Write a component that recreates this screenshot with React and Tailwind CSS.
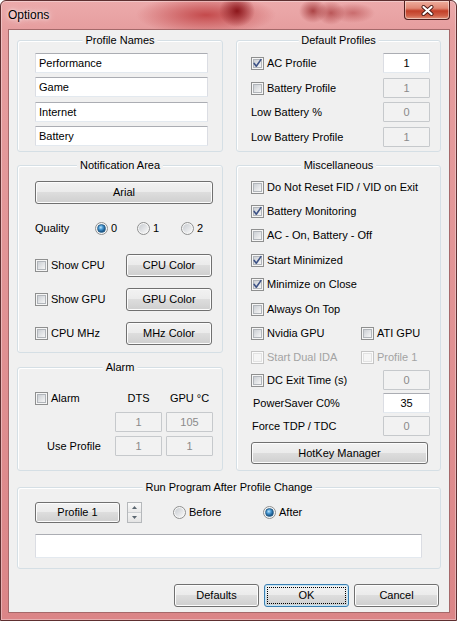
import React from "react";

const B = (...c) => c.filter(Boolean).join(" ");

function Group({ title, className, children }) {
  return (
    <div
      className={B(
        "relative shrink-0 rounded-[3px] border border-[#d5dfe5] shadow-[inset_1px_1px_0_#ffffff]",
        className
      )}
    >
      <span className="absolute left-1/2 top-[-1px] -translate-x-1/2 -translate-y-1/2 whitespace-nowrap bg-[#f0f0f0] px-[3px] leading-[13px]">
        {title}
      </span>
      {children}
    </div>
  );
}

function Check({ on, dis }) {
  return (
    <span
      className={B(
        "relative block h-[13px] w-[13px] shrink-0 border p-px",
        dis ? "border-[#c5c5c5] bg-[#fbfbfb]" : "border-[#8e8f8f] bg-[#f6f6f6]"
      )}
    >
      <span
        className={B(
          "block h-full w-full border",
          dis
            ? "border-[#e2e2e2] bg-[#f5f5f5]"
            : "border-[#b1b5ba] bg-[linear-gradient(135deg,#cbcfd4,#f6f6f6)]"
        )}
      />
      {on && (
        <svg className="absolute left-0 top-0" width="11" height="11" viewBox="0 0 11 11">
          <path
            d="M2.2 5.4 L4.3 8.2 L8.9 1.6"
            fill="none"
            stroke="#3d5286"
            strokeWidth="1.6"
            strokeLinecap="round"
            strokeLinejoin="round"
          />
        </svg>
      )}
    </span>
  );
}

function CL({ on, dis, children, className }) {
  return (
    <div className={B("flex items-center", className)}>
      <Check on={on} dis={dis} />
      <span className={B("ml-[3px] whitespace-nowrap leading-[13px]", dis && "text-[#a3a3a3]")}>
        {children}
      </span>
    </div>
  );
}

function Radio({ on }) {
  return (
    <span className="flex h-[13px] w-[13px] shrink-0 items-center justify-center rounded-full border border-[#8e8f8f] bg-[#f7f7f7]">
      {on ? (
        <span className="block h-[9px] w-[9px] rounded-full border border-[#2c628b] bg-[radial-gradient(circle_at_40%_35%,#bfe6fc_0%,#4596d1_35%,#1a5689_70%,#0e3f66_100%)]" />
      ) : (
        <span className="block h-[9px] w-[9px] rounded-full bg-[linear-gradient(135deg,#c8ccd1,#f8f8f8)]" />
      )}
    </span>
  );
}

function Btn({ className, children, def }) {
  return (
    <div
      className={B(
        "flex shrink-0 items-center justify-center rounded-[3px] border leading-[13px] bg-[linear-gradient(to_bottom,#f2f2f2_0%,#ebebeb_49%,#dddddd_50%,#cfcfcf_100%)]",
        def
          ? "border-[#3c7fb1] shadow-[inset_0_0_0_1px_#c4e5f6] outline-1 outline-dotted outline-[#000000] -outline-offset-4"
          : "border-[#707070] shadow-[inset_0_0_0_1px_#fcfcfc]",
        className
      )}
    >
      {children}
    </div>
  );
}

function Field({ className, v, dis, left }) {
  return (
    <div
      className={B(
        "flex shrink-0 items-center rounded-[1px] border leading-[13px]",
        left ? "pl-[3px]" : "justify-center",
        dis
          ? "border-[#c6c9cc] bg-[#f2f2f2] text-[#8a8a8a]"
          : "border-[#abadb3] border-x-[#dbdde3] border-b-[#e3e9ef] bg-white",
        className
      )}
    >
      {v}
    </div>
  );
}

function Spinner({ className }) {
  return (
    <div className={B("flex h-[21px] w-[15px] shrink-0 flex-col border border-[#b5b8bb] bg-[#f4f4f4]", className)}>
      <div className="flex flex-1 items-center justify-center border-b border-[#cdd0d3] bg-[linear-gradient(to_bottom,#fafafa,#e9e9e9)]">
        <svg width="5" height="3" viewBox="0 0 5 3">
          <path d="M2.5 0 L5 3 L0 3Z" fill="#5a6670" />
        </svg>
      </div>
      <div className="flex flex-1 items-center justify-center bg-[linear-gradient(to_bottom,#f4f4f4,#e4e4e4)]">
        <svg width="5" height="3" viewBox="0 0 5 3">
          <path d="M0 0 L5 0 L2.5 3Z" fill="#5a6670" />
        </svg>
      </div>
    </div>
  );
}

export default function App() {
  return (
    <div className="h-[621px] w-[457px] font-['Liberation_Sans',Arial,sans-serif] text-[11px] text-black">
      <div className="flex h-full w-full flex-col overflow-hidden rounded-t-[6px] border border-[#5e2f30] bg-[radial-gradient(ellipse_18px_16px_at_236px_10px,#8c161b_0%,rgba(140,22,27,0)_100%),radial-gradient(ellipse_70px_20px_at_205px_14px,rgba(192,64,66,0.9),rgba(192,64,66,0)),radial-gradient(ellipse_14px_12px_at_312px_10px,rgba(160,50,52,0.85),rgba(160,50,52,0)),radial-gradient(ellipse_14px_12px_at_330px_12px,rgba(170,60,62,0.75),rgba(170,60,62,0)),radial-gradient(ellipse_22px_10px_at_352px_12px,rgba(180,70,72,0.6),rgba(180,70,72,0)),linear-gradient(to_bottom,#ecaaab_0px,#e69e9f_28px,#db8587_100%)] shadow-[inset_0_0_0_1px_rgba(255,255,255,0.35)]">
        <div className="flex h-[28px] shrink-0 items-start justify-between">
          <span className="ml-[7px] mt-[7px] text-[12px] leading-[15px] [text-shadow:0_0_7px_#ffffff,0_0_3px_rgba(255,255,255,0.8)]">
            Options
          </span>
          <div className="mr-[6px] flex h-[19px] w-[46px] items-center justify-center rounded-b-[4px] border border-t-0 border-[#4f1e1e] bg-[linear-gradient(to_bottom,#eeaf9f_0%,#e08774_40%,#c23f28_55%,#cf5d45_80%,#e2937c_100%)] shadow-[inset_0_0_0_1px_rgba(255,255,255,0.45)]">
            <svg width="13" height="11" viewBox="0 0 13 11">
              <path d="M2.5 2 L10.5 9 M10.5 2 L2.5 9" stroke="#4a1a16" strokeWidth="4" strokeLinecap="round" />
              <path d="M2.5 2 L10.5 9 M10.5 2 L2.5 9" stroke="#ffffff" strokeWidth="2.2" strokeLinecap="round" />
            </svg>
          </div>
        </div>

        <div className="mb-[7px] ml-[7px] mr-[6px] flex flex-1 flex-col border border-[#a5696a] bg-[#f0f0f0] pl-[8px] pt-[10px]">
          {/* Row 1 */}
          <div className="flex gap-[13px]">
            <Group title="Profile Names" className="h-[112px] w-[206px] pl-[17px] pt-[12px]">
              <Field className="h-[20px] w-[173px]" v="Performance" left />
              <Field className="mt-[4px] h-[20px] w-[173px]" v="Game" left />
              <Field className="mt-[5px] h-[20px] w-[173px]" v="Internet" left />
              <Field className="mt-[4px] h-[20px] w-[173px]" v="Battery" left />
            </Group>
            <Group title="Default Profiles" className="h-[112px] w-[205px] pl-[14px] pt-[12px]">
              <div className="flex h-[20px] w-[179px] items-center justify-between">
                <CL on>AC Profile</CL>
                <Field className="h-[20px] w-[47px]" v="1" />
              </div>
              <div className="mt-[5px] flex h-[20px] w-[179px] items-center justify-between">
                <CL>Battery Profile</CL>
                <Field className="h-[20px] w-[47px]" v="1" dis />
              </div>
              <div className="mt-[4px] flex h-[20px] w-[179px] items-center justify-between">
                <span className="leading-[13px]">Low Battery %</span>
                <Field className="h-[20px] w-[47px]" v="0" dis />
              </div>
              <div className="mt-[5px] flex h-[20px] w-[179px] items-center justify-between">
                <span className="leading-[13px]">Low Battery Profile</span>
                <Field className="h-[20px] w-[47px]" v="1" dis />
              </div>
            </Group>
          </div>

          {/* Row 2 */}
          <div className="mt-[13px] flex gap-[13px]">
            <div className="flex flex-col">
              <Group title="Notification Area" className="h-[188px] w-[206px] pl-[17px] pt-[15px]">
                <Btn className="h-[23px] w-[178px]">Arial</Btn>
                <div className="mt-[18px] flex h-[13px] items-center">
                  <span className="w-[60px] leading-[13px]">Quality</span>
                  <div className="flex w-[42px] items-center">
                    <Radio on />
                    <span className="ml-[3px] leading-[13px]">0</span>
                  </div>
                  <div className="flex w-[44px] items-center">
                    <Radio />
                    <span className="ml-[3px] leading-[13px]">1</span>
                  </div>
                  <div className="flex items-center">
                    <Radio />
                    <span className="ml-[3px] leading-[13px]">2</span>
                  </div>
                </div>
                <div className="mt-[19px] flex h-[23px] items-center">
                  <CL className="w-[91px]">Show CPU</CL>
                  <Btn className="h-[23px] w-[86px]">CPU Color</Btn>
                </div>
                <div className="mt-[11px] flex h-[23px] items-center">
                  <CL className="w-[91px]">Show GPU</CL>
                  <Btn className="h-[23px] w-[86px]">GPU Color</Btn>
                </div>
                <div className="mt-[11px] flex h-[23px] items-center">
                  <CL className="w-[91px]">CPU MHz</CL>
                  <Btn className="h-[23px] w-[86px]">MHz Color</Btn>
                </div>
              </Group>
              <Group title="Alarm" className="mt-[14px] h-[104px] w-[206px] pl-[17px] pt-[20px]">
                <div className="grid grid-cols-[76px_47px_47px] grid-rows-[20px_20px_20px] items-center gap-x-[4px] gap-y-[4px]">
                  <CL>Alarm</CL>
                  <span className="text-center leading-[13px]">DTS</span>
                  <span className="text-center leading-[13px]">GPU °C</span>
                  <span />
                  <Field className="h-[20px]" v="1" dis />
                  <Field className="h-[20px]" v="105" dis />
                  <span className="pl-[12px] leading-[13px]">Use Profile</span>
                  <Field className="h-[20px]" v="1" dis />
                  <Field className="h-[20px]" v="1" dis />
                </div>
              </Group>
            </div>

            <Group title="Miscellaneous" className="h-[306px] w-[205px] pl-[14px] pt-[9px]">
              <CL className="h-[24px]">Do Not Reset FID / VID on Exit</CL>
              <CL on className="h-[24px]">Battery Monitoring</CL>
              <CL className="h-[25px]">AC - On, Battery - Off</CL>
              <CL on className="h-[24px]">Start Minimized</CL>
              <CL on className="h-[25px]">Minimize on Close</CL>
              <CL className="h-[24px]">Always On Top</CL>
              <div className="flex h-[24px] items-center">
                <CL className="w-[110px]">Nvidia GPU</CL>
                <CL>ATI GPU</CL>
              </div>
              <div className="flex h-[24px] items-center">
                <CL dis className="w-[110px]">Start Dual IDA</CL>
                <CL dis>Profile 1</CL>
              </div>
              <div className="mt-[1px] flex h-[20px] w-[179px] items-center justify-between">
                <CL>DC Exit Time (s)</CL>
                <Field className="h-[20px] w-[47px]" v="0" dis />
              </div>
              <div className="mt-[3px] flex h-[20px] w-[179px] items-center justify-between">
                <span className="pl-[2px] leading-[13px]">PowerSaver C0%</span>
                <Field className="h-[20px] w-[47px]" v="35" />
              </div>
              <div className="mt-[3px] flex h-[20px] w-[179px] items-center justify-between">
                <span className="pl-[1px] leading-[13px]">Force TDP / TDC</span>
                <Field className="h-[20px] w-[47px]" v="0" dis />
              </div>
              <Btn className="mt-[6px] h-[22px] w-[177px]">HotKey Manager</Btn>
            </Group>
          </div>

          {/* Row 3 */}
          <Group title="Run Program After Profile Change" className="mt-[16px] h-[82px] w-[424px] pl-[17px] pt-[14px]">
            <div className="flex h-[21px] items-center">
              <Btn className="h-[21px] w-[85px]">Profile 1</Btn>
              <Spinner className="ml-[7px]" />
              <div className="ml-[31px] flex w-[90px] items-center">
                <Radio />
                <span className="ml-[3px] leading-[13px]">Before</span>
              </div>
              <div className="flex items-center">
                <Radio on />
                <span className="ml-[3px] leading-[13px]">After</span>
              </div>
            </div>
            <Field className="mt-[11px] h-[24px] w-[387px]" v="" left />
          </Group>

          {/* Buttons */}
          <div className="mt-[15px] flex justify-end gap-[5px] pr-[10px]">
            <Btn className="h-[23px] w-[85px]">Defaults</Btn>
            <Btn def className="h-[23px] w-[85px]">OK</Btn>
            <Btn className="h-[23px] w-[85px]">Cancel</Btn>
          </div>
        </div>
      </div>
    </div>
  );
}
